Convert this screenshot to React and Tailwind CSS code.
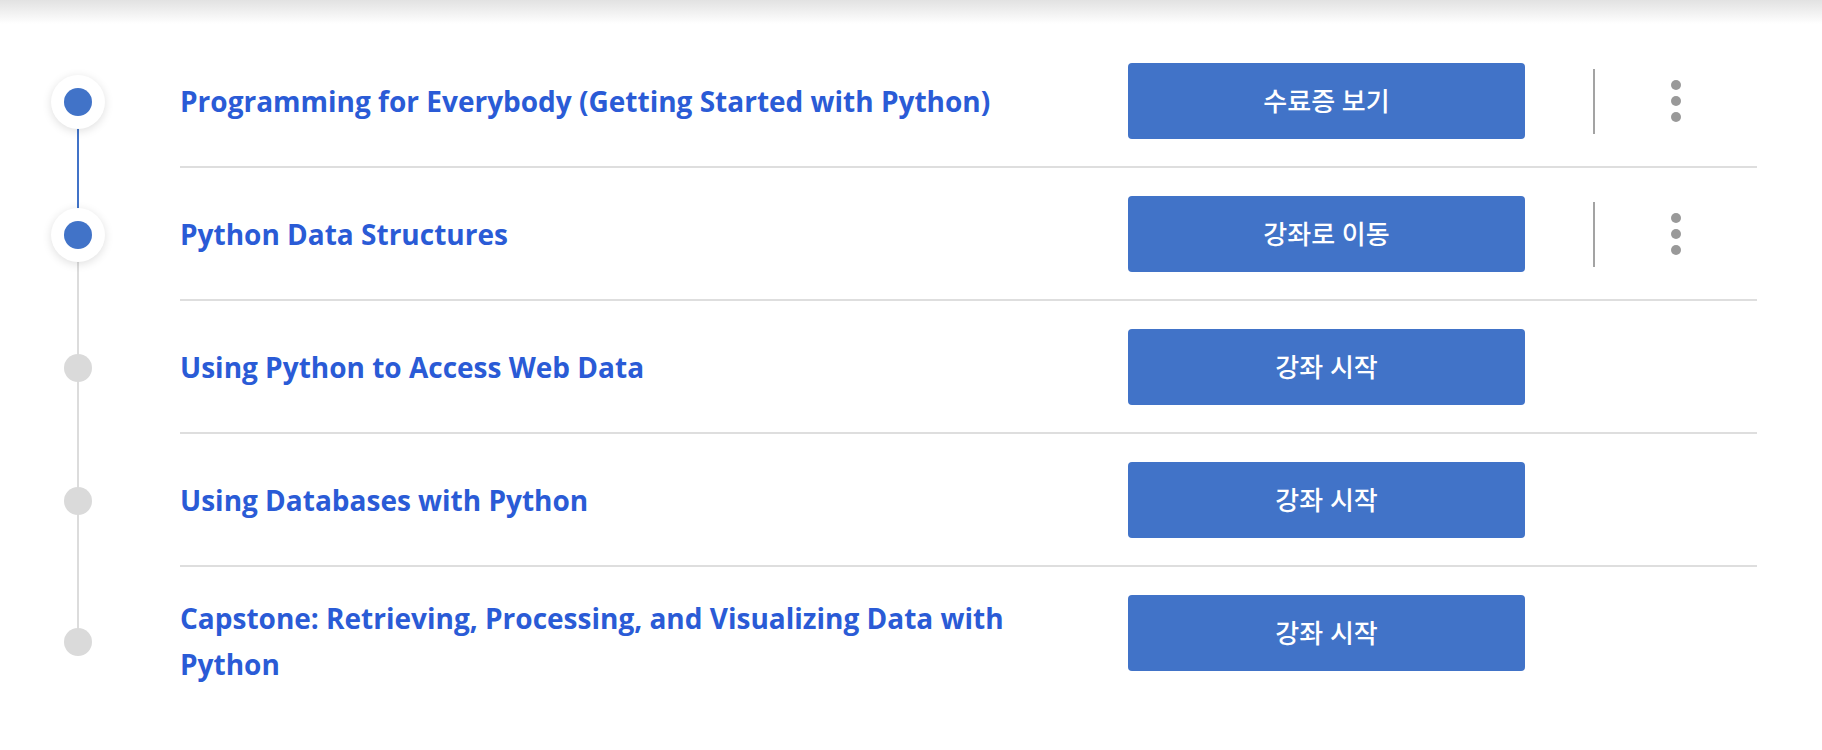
import React from "react";

const courses = [
  { title: "Programming for Everybody (Getting Started with Python)", action: "수료증 보기", state: "done", menu: true },
  { title: "Python Data Structures", action: "강좌로 이동", state: "active", menu: true },
  { title: "Using Python to Access Web Data", action: "강좌 시작", state: "todo", menu: false },
  { title: "Using Databases with Python", action: "강좌 시작", state: "todo", menu: false },
  { title: "Capstone: Retrieving, Processing, and Visualizing Data with Python", action: "강좌 시작", state: "todo", menu: false },
];

function Node({ on }) {
  if (on) {
    return (
      <div className="relative z-10 flex h-[54px] w-[54px] items-center justify-center rounded-full bg-white shadow-[0_2px_10px_rgba(0,0,0,0.13)]">
        <div className="h-[28px] w-[28px] rounded-full bg-[#4173c8]" />
      </div>
    );
  }
  return <div className="relative z-10 h-[28px] w-[28px] rounded-full bg-[#dadada]" />;
}

function Row({ course, index, last }) {
  const on = course.state !== "todo";
  // line colour: blue between completed/active nodes, gray after
  const topBlue = index > 0 && courses[index - 1].state !== "todo" && on;
  const bottomBlue = !last && on && courses[index + 1].state !== "todo";

  return (
    <div className="flex">
      <div className="relative flex w-[180px] shrink-0 items-center">
        {index > 0 && (
          <div
            className={
              "absolute left-[77px] top-0 h-1/2 w-[2px] " + (topBlue ? "bg-[#4173c8]" : "bg-[#dcdcdc]")
            }
          />
        )}
        {!last && (
          <div
            className={
              "absolute left-[77px] bottom-0 h-1/2 w-[2px] " + (bottomBlue ? "bg-[#4173c8]" : "bg-[#dcdcdc]")
            }
          />
        )}
        <div className="flex w-[156px] justify-center">
          <Node on={on} />
        </div>
      </div>

      <div
        className={
          "flex w-[1577px] items-start pt-[28px] pb-[27px] " + (last ? "border-b-2 border-transparent" : "border-b-2 border-[#dedede]")
        }
      >
        <div className="flex min-h-[76px] flex-1 items-center pr-[60px]">
          <p className="text-[28px] font-bold leading-[46px] text-[#2a5bd6]">{course.title}</p>
        </div>
        <button className="flex h-[76px] w-[397px] shrink-0 items-center justify-center rounded-[4px] bg-[#4173c8] text-[26px] font-medium text-white">
          {course.action}
        </button>
        <div className="flex h-[76px] w-[232px] shrink-0 items-center">
          {course.menu && (
            <>
              <div className="ml-[68px] h-[65px] w-[2px] bg-[#a3a3a3]" />
              <div className="ml-[76px] flex flex-col gap-[6px]">
                <span className="h-[10px] w-[10px] rounded-full bg-[#999999]" />
                <span className="h-[10px] w-[10px] rounded-full bg-[#999999]" />
                <span className="h-[10px] w-[10px] rounded-full bg-[#999999]" />
              </div>
            </>
          )}
        </div>
      </div>
    </div>
  );
}

export default function App() {
  return (
    <div
      className="min-h-[750px] w-[1822px] bg-white"
      style={{ fontFamily: '"Open Sans", "Noto Sans CJK KR", sans-serif' }}
    >
      <div className="h-[24px] bg-linear-to-b from-[#e2e2e2] to-white" />
      <div className="mt-[11px]">
        {courses.map((c, i) => (
          <Row key={c.title} course={c} index={i} last={i === courses.length - 1} />
        ))}
      </div>
    </div>
  );
}
